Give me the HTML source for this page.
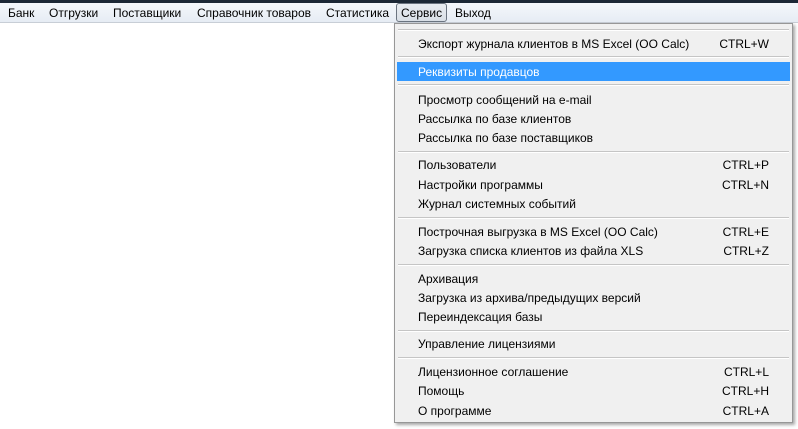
<!DOCTYPE html>
<html><head><meta charset="utf-8"><style>
*{margin:0;padding:0;box-sizing:border-box}
body{width:798px;height:429px;background:#fff;position:relative;overflow:hidden;font-family:"Liberation Sans","DejaVu Sans",sans-serif;font-size:12px;color:#000}
.top{position:absolute;left:0;top:0;width:798px;height:3px;background:#1c2836}
.bar{position:absolute;left:0;top:3px;width:798px;height:20px;background:linear-gradient(#f4f7fb,#e6ecf4);border-bottom:1px solid #c8ced6}
.bar span{position:absolute;top:3px;white-space:nowrap}
.sel{position:absolute;left:396px;top:3px;width:51px;height:19px;border:1px solid #6b7480;border-radius:3px;background:linear-gradient(#e9edf2,#d9dfe6)}
.menu{position:absolute;left:394px;top:23px;width:399px;height:400px;background:#f0f0f0;border:1px solid #979797;box-shadow:2px 2px 3px rgba(0,0,0,.35)}
.it{position:absolute;left:23px;white-space:nowrap}
.sc{position:absolute;right:23px;white-space:nowrap}
.sep{position:absolute;left:3px;right:3px;height:2px;border-top:1px solid #c5c5c5;border-bottom:1px solid #fff}
.hl{position:absolute;left:2px;right:2px;top:38px;height:19px;background:#3399ff}
</style></head><body>
<div class="top"></div>
<div class="bar">
<span style="left:8px">Банк</span>
<span style="left:49px">Отгрузки</span>
<span style="left:113px">Поставщики</span>
<span style="left:197px">Справочник товаров</span>
<span style="left:326px">Статистика</span>
</div>
<div class="sel"></div>
<div class="bar" style="background:none;border:none"><span style="left:401px">Сервис</span><span style="left:455px">Выход</span></div>
<div class="menu">
<div class="sep" style="top:5px"></div>
<div class="it" style="top:13px">Экспорт журнала клиентов в MS Excel (OO Calc)</div><div class="sc" style="top:13px">CTRL+W</div>
<div class="sep" style="top:32px"></div>
<div class="hl"></div>
<div class="it" style="top:41px;color:#fff">Реквизиты продавцов</div>
<div class="sep" style="top:60px"></div>
<div class="it" style="top:69px">Просмотр сообщений на e-mail</div>
<div class="it" style="top:88px">Рассылка по базе клиентов</div>
<div class="it" style="top:107px">Рассылка по базе поставщиков</div>
<div class="sep" style="top:127px"></div>
<div class="it" style="top:134px">Пользователи</div><div class="sc" style="top:134px">CTRL+P</div>
<div class="it" style="top:154px">Настройки программы</div><div class="sc" style="top:154px">CTRL+N</div>
<div class="it" style="top:173px">Журнал системных событий</div>
<div class="sep" style="top:193px"></div>
<div class="it" style="top:201px">Построчная выгрузка в MS Excel (OO Calc)</div><div class="sc" style="top:201px">CTRL+E</div>
<div class="it" style="top:220px">Загрузка списка клиентов из файла XLS</div><div class="sc" style="top:220px">CTRL+Z</div>
<div class="sep" style="top:240px"></div>
<div class="it" style="top:248px">Архивация</div>
<div class="it" style="top:267px">Загрузка из архива/предыдущих версий</div>
<div class="it" style="top:286px">Переиндексация базы</div>
<div class="sep" style="top:306px"></div>
<div class="it" style="top:313px">Управление лицензиями</div>
<div class="sep" style="top:333px"></div>
<div class="it" style="top:341px">Лицензионное соглашение</div><div class="sc" style="top:341px">CTRL+L</div>
<div class="it" style="top:360px">Помощь</div><div class="sc" style="top:360px">CTRL+H</div>
<div class="it" style="top:380px">О программе</div><div class="sc" style="top:380px">CTRL+A</div>
</div>
</body></html>
